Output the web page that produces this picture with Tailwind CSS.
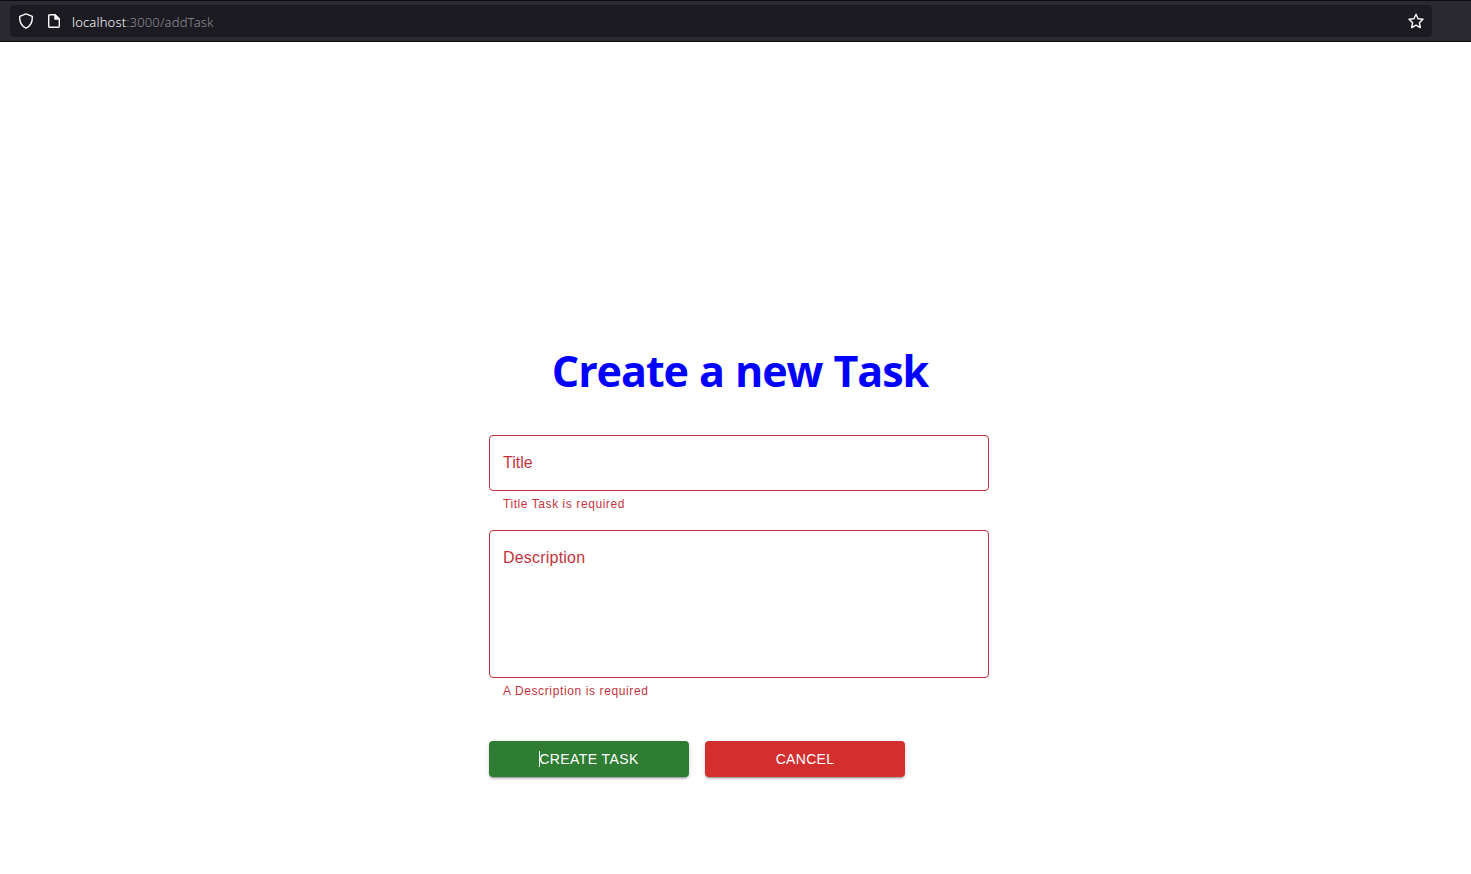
<!DOCTYPE html>
<html lang="en">
<head>
<meta charset="utf-8">
<title>Create a new Task</title>
<script src="https://cdn.jsdelivr.net/npm/@tailwindcss/browser@4"></script>
</head>
<body class="h-screen overflow-hidden bg-white flex flex-col font-['Liberation_Sans',Arial,sans-serif]">
<header class="h-[42px] shrink-0 bg-[#2b2a33] border-t border-b border-[#0c0c0d] pt-1 pl-[10px] pr-[39px]">
  <div class="h-8 rounded bg-[#1c1b22] flex items-center pl-2 pr-2 text-[#fbfbfe]">
    <svg class="size-4 shrink-0" viewBox="0 0 16 16" fill="none" stroke="currentColor" stroke-width="1.4" stroke-linejoin="round"><path d="M8 .9 14.3 3.3C14.6 8.7 13 13 8 15.2 3 13 1.400 8.700 1.700 3.300Z"/></svg>
    <svg class="size-4 shrink-0 ml-3" viewBox="0 0 16 16" fill="none" stroke="currentColor" stroke-width="1.4" stroke-linejoin="round"><path d="M3.700 1.700h5.300l4.300 4.300v7.300a1 1 0 0 1-1 1H3.700a1 1 0 0 1-1-1V2.700a1 1 0 0 1 1-1Z"/><path d="M9 1.700V6h4.300Z" fill="currentColor"/></svg>
    <div class="ml-[10px] mt-[1px] text-[13px] leading-4 tracking-[0.160px] whitespace-nowrap font-['Noto_Sans',sans-serif] font-light text-[#8f8f98]"><span class="text-[#fbfbfe]">localhost</span>:3000/addTask</div>
    <svg class="size-4 shrink-0 ml-auto" viewBox="0 0 16 16" fill="none" stroke="currentColor" stroke-width="1.4" stroke-linejoin="round"><path d="m8 1.200 2.100 4.500 4.900.6-3.600 3.400.9 4.900L8 12.200l-4.300 2.400.9-4.900L1 6.300l4.900-.6Z"/></svg>
  </div>
</header>
<main class="w-[500px] ml-[489px] pt-[296px] flex flex-col text-[#c2343d]">
  <h1 class="h-[66px] ml-[2px] leading-[66px] text-center text-[43px] tracking-[-1.050px] [word-spacing:1px] font-bold text-[#0000ff] whitespace-nowrap font-['Open_Sans',sans-serif]">Create a new Task</h1>
  <div class="mt-[31px] h-14 rounded border border-[#c2343d] pl-[13px] pt-[15px] text-base leading-6">Title</div>
  <p class="mt-[3px] ml-[14px] text-xs leading-5 tracking-[0.570px]">Title Task is required</p>
  <div class="mt-4 h-[148px] rounded border border-[#c2343d] pl-[13px] pt-[15px] text-base leading-6 tracking-[0.200px]">Description</div>
  <p class="mt-[3px] ml-[14px] text-xs leading-5 tracking-[0.620px]">A Description is required</p>
  <div class="mt-10 flex gap-4">
    <button class="w-[200px] h-9 rounded bg-[#2e7d32] text-white text-sm tracking-[0.4px] flex items-center justify-center shadow-[0_3px_1px_-2px_rgba(0,0,0,.2),0_2px_2px_rgba(0,0,0,.14),0_1px_5px_rgba(0,0,0,.12)]"><span class="relative">CREATE TASK<span class="absolute left-0 top-[2px] h-4 w-px bg-white"></span></span></button>
    <button class="w-[200px] h-9 rounded bg-[#d32f2f] text-white text-sm tracking-[0.3px] flex items-center justify-center shadow-[0_3px_1px_-2px_rgba(0,0,0,.2),0_2px_2px_rgba(0,0,0,.14),0_1px_5px_rgba(0,0,0,.12)]">CANCEL</button>
  </div>
</main>
</body>
</html>
